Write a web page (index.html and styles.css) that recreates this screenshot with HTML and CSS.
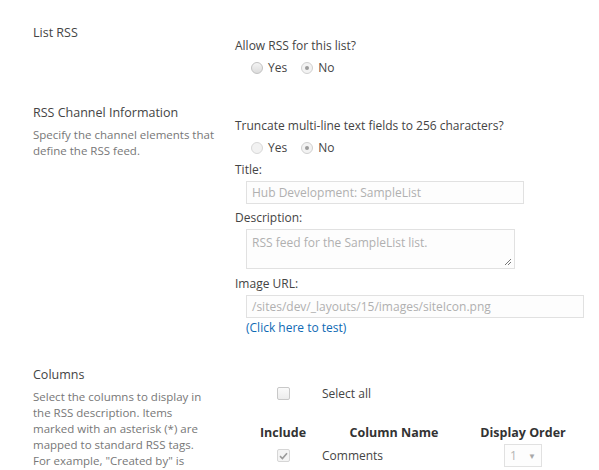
FILE: index.html
```html
<!DOCTYPE html>
<html lang="en">
<head>
<meta charset="utf-8">
<title>RSS Settings</title>
<link rel="stylesheet" href="styles.css">
</head>
<body>
<form class="settings">
  <section class="section sec-list">
    <div class="side">
      <h3 class="side-title">List RSS</h3>
    </div>
    <div class="main">
      <div class="question">Allow RSS for this list?</div>
      <div class="radios">
        <label class="radio"><span class="dot"></span>Yes</label>
        <label class="radio"><span class="dot on"></span>No</label>
      </div>
    </div>
  </section>

  <section class="section sec-channel">
    <div class="side">
      <h3 class="side-title">RSS Channel Information</h3>
      <p class="side-desc">Specify the channel elements that define the RSS feed.</p>
    </div>
    <div class="main">
      <div class="question">Truncate multi-line text fields to 256 characters?</div>
      <div class="radios">
        <label class="radio"><span class="dot light"></span>Yes</label>
        <label class="radio"><span class="dot on"></span>No</label>
      </div>
      <div class="field-label first">Title:</div>
      <div class="textbox tb-title">Hub Development: SampleList</div>
      <div class="field-label desc-label">Description:</div>
      <div class="textbox tb-desc">RSS feed for the SampleList list.
        <svg class="grip" width="8" height="8" viewBox="0 0 8 8"><path d="M7 1 L1 7 M7 4 L4 7" stroke="#777" stroke-width="1"/></svg>
      </div>
      <div class="field-label">Image URL:</div>
      <div class="textbox tb-url">/sites/dev/_layouts/15/images/siteIcon.png</div>
      <a class="test-link" href="#">(Click here to test)</a>
    </div>
  </section>

  <section class="section sec-columns">
    <div class="side">
      <h3 class="side-title">Columns</h3>
      <p class="side-desc">Select the columns to display in the RSS description. Items marked with an asterisk (*) are mapped to standard RSS tags. For example, "Created by" is</p>
    </div>
    <div class="main">
      <div class="col-grid">
        <div class="cell-center"><span class="check"></span></div>
        <div class="cell-name">Select all</div>
        <div></div>
      </div>
      <div class="col-grid head">
        <div class="cell-center">Include</div>
        <div class="cell-center">Column Name</div>
        <div class="cell-center">Display Order</div>
      </div>
      <div class="col-grid row">
        <div class="cell-center"><span class="check on"><svg width="9" height="8" viewBox="0 0 9 8"><path d="M1 4.2 L3.4 6.5 L8 1.2" fill="none" stroke="#9a9a9a" stroke-width="1.6"/></svg></span></div>
        <div class="cell-name">Comments</div>
        <div class="cell-center"><span class="select"><span class="sel-val">1</span><span class="sel-arrow">&#9660;</span></span></div>
      </div>
    </div>
  </section>
</form>
</body>
</html>
```
FILE: styles.css
```css
* { box-sizing: border-box; }

html, body {
  margin: 0;
  padding: 0;
  background: #ffffff;
}

body {
  font-family: "Open Sans", "Noto Sans", sans-serif;
  font-size: 12px;
  color: #444444;
  overflow: hidden;
  height: 470px;
}

.settings {
  padding: 24px 0 0 33px;
}

.section {
  display: grid;
  grid-template-columns: 202px 1fr;
}

.sec-list { height: 80px; }
.sec-channel { height: 262px; }

.side-title {
  margin: 0;
  font-size: 12.5px;
  font-weight: normal;
  line-height: 18px;
  color: #444444;
}

.side-desc {
  margin: 5px 0 0;
  width: 196px;
  font-size: 11.5px;
  line-height: 16px;
  color: #777777;
}

.sec-columns .side-desc {
  width: 180px;
}

.main {
  padding-top: 13px;
}

.question {
  line-height: 18px;
}

.radios {
  display: flex;
  gap: 14px;
  padding-left: 16px;
  margin-top: 4px;
  line-height: 18px;
}

.radio {
  display: flex;
  align-items: center;
  gap: 5px;
}

.dot {
  width: 12px;
  height: 12px;
  border-radius: 50%;
  border: 1px solid #c2c2c2;
  background: linear-gradient(#f4f4f4, #dcdcdc);
  display: inline-flex;
  align-items: center;
  justify-content: center;
}

.dot.light {
  border-color: #d8d8d8;
  background: #f2f2f2;
}

.dot.on {
  border-color: #d0d0d0;
  background: #f3f3f3;
}

.dot.on::after {
  content: "";
  width: 4px;
  height: 4px;
  border-radius: 50%;
  background: #9c9c9c;
}

.field-label {
  margin-top: 6px;
  line-height: 18px;
}

.field-label.first {
  margin-top: 4px;
}

.field-label.desc-label {
  margin-top: 5px;
}

.textbox {
  position: relative;
  margin: 2px 0 0 11px;
  border: 1px solid #e1e1e1;
  background: #fdfdfd;
  color: #b0b0b0;
  padding: 2px 5px;
  line-height: 17px;
}

.tb-title { width: 278px; height: 23px; }
.tb-desc { width: 269px; height: 40px; padding-top: 4px; }
.tb-url { width: 338px; height: 23px; }

.grip {
  position: absolute;
  right: 2px;
  bottom: 2px;
}

.test-link {
  display: block;
  margin-left: 11px;
  margin-top: 1px;
  color: #0f6ab4;
  text-decoration: none;
  line-height: 18px;
}

.sec-columns .main {
  padding-top: 19px;
}

.col-grid {
  display: grid;
  grid-template-columns: 56px 166px 92px;
  margin-left: 20px;
  align-items: center;
}

.col-grid.head {
  margin-top: 22px;
  font-weight: bold;
  color: #333333;
  font-size: 12.5px;
  line-height: 18px;
}

.col-grid.row {
  margin-top: 2px;
}

.cell-center {
  display: flex;
  justify-content: center;
}

.cell-name {
  padding-left: 11px;
}

.check {
  width: 13px;
  height: 13px;
  border: 1px solid #c8c8c8;
  border-radius: 2px;
  background: linear-gradient(#fafafa, #ececec);
  display: inline-flex;
  align-items: center;
  justify-content: center;
}

.check.on {
  border-color: #d6d6d6;
  background: #f4f4f4;
}

.select {
  width: 38px;
  height: 23px;
  border: 1px solid #e1e1e1;
  background: #fdfdfd;
  color: #b5b5b5;
  display: flex;
  align-items: center;
  justify-content: space-between;
  padding: 0 5px;
}

.sel-arrow {
  font-size: 8px;
  color: #a8a8a8;
}
```
